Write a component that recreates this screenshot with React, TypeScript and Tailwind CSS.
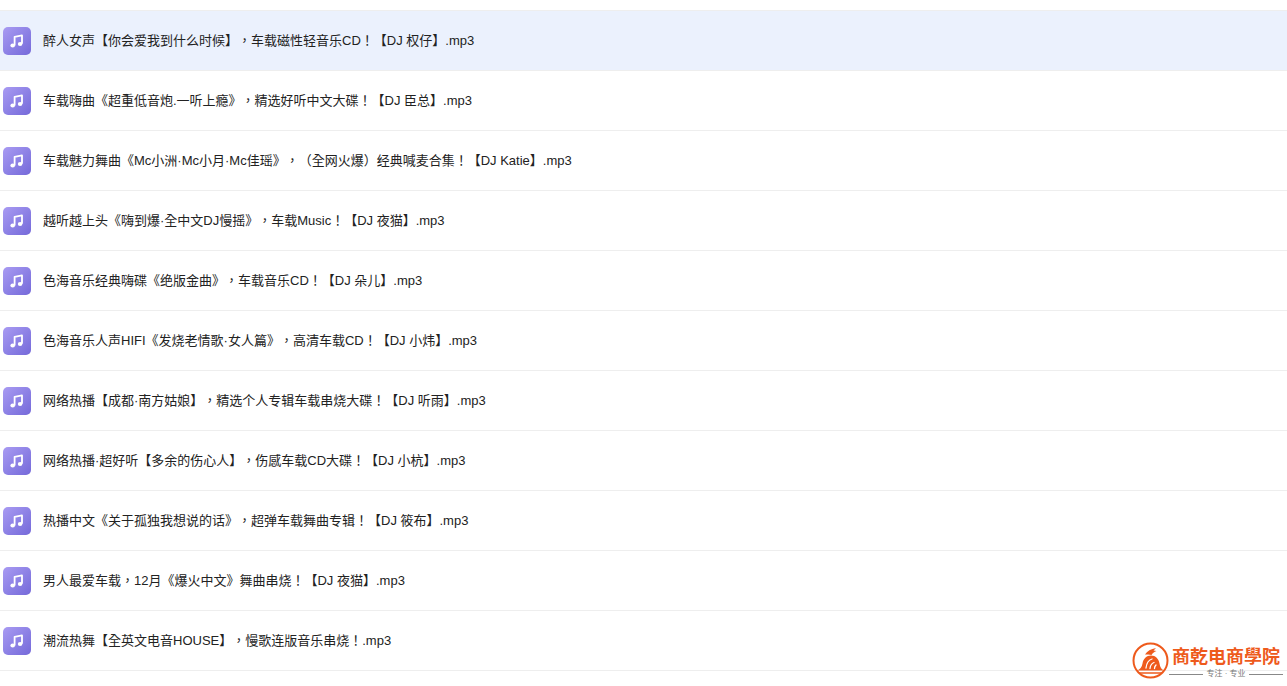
import React from 'react';

const tracks = [
  '醉人女声【你会爱我到什么时候】，车载磁性轻音乐CD！【DJ 权仔】.mp3',
  '车载嗨曲《超重低音炮.一听上瘾》，精选好听中文大碟！【DJ 臣总】.mp3',
  '车载魅力舞曲《Mc小洲·Mc小月·Mc佳瑶》，（全网火爆）经典喊麦合集！【DJ Katie】.mp3',
  '越听越上头《嗨到爆·全中文DJ慢摇》，车载Music！【DJ 夜猫】.mp3',
  '色海音乐经典嗨碟《绝版金曲》，车载音乐CD！【DJ 朵儿】.mp3',
  '色海音乐人声HIFI《发烧老情歌·女人篇》，高清车载CD！【DJ 小炜】.mp3',
  '网络热播【成都·南方姑娘】，精选个人专辑车载串烧大碟！【DJ 听雨】.mp3',
  '网络热播·超好听【多余的伤心人】，伤感车载CD大碟！【DJ 小杭】.mp3',
  '热播中文《关于孤独我想说的话》，超弹车载舞曲专辑！【DJ 筱布】.mp3',
  '男人最爱车载，12月《爆火中文》舞曲串烧！【DJ 夜猫】.mp3',
  '潮流热舞【全英文电音HOUSE】，慢歌连版音乐串烧！.mp3',
];

const MusicIcon = () => (
  <div className="w-[28px] h-[28px] shrink-0 rounded-[5px] bg-gradient-to-br from-[#a99bf2] to-[#7569d9] flex items-center justify-center">
    <svg width="18" height="18" viewBox="0 0 18 18" fill="none">
      <path d="M6.600 13.400V4.800L14 3.400v8.400" stroke="#fff" strokeWidth="1.800" strokeLinejoin="round" />
      <ellipse cx="4.700" cy="13.600" rx="2.300" ry="2" fill="#fff" />
      <ellipse cx="12.100" cy="12" rx="2.300" ry="2" fill="#fff" />
    </svg>
  </div>
);

const Row = ({ title, active }: { title: string; active: boolean }) => (
  <div className={`h-[60px] border-b border-[#eeeeee] pl-[3px] flex items-center gap-[12px] ${active ? 'bg-[#ebf1fd]' : 'bg-white'}`}>
    <MusicIcon />
    <span className="text-[13px] text-[#222222] whitespace-nowrap [text-spacing-trim:space-all]">{title}</span>
  </div>
);

export default function App() {
  return (
    <div className="relative w-[1287px] h-[686px] overflow-hidden bg-white font-['Liberation_Sans','Noto_Sans_CJK_TC',sans-serif]">
      <div className="pt-[10px]">
        <div className="border-t border-[#eeeeee]">
          {tracks.map((t, i) => (
            <Row key={i} title={t} active={i === 0} />
          ))}
        </div>
      </div>

      {/* watermark */}
      <div className="absolute left-[1132px] top-[642px] flex gap-[3px]">
        <svg width="37" height="37" viewBox="0 0 37 37" fill="none">
          <circle cx="18.500" cy="18.500" r="17" stroke="#ee5a1c" strokeWidth="2" />
          <path d="M5 28.500h27c-2.500-1-4-3.500-4.500-7-.7-4.500-4-8-8.500-8s-7.800 3.500-8.500 8c-.5 3.500-2.500 6-5.500 7z" fill="#ee5a1c" />
          <path d="M13 12.500c2-3.500 6-5.500 11-6.500l-2.500 2.500 3 .5c-2.500 1-4 2-5 4-2-.5-4.500-.5-6.500-.5z" fill="#ee5a1c" />
          <path d="M14 26c.5-4.500 2.500-8 6-9M18 26.500c.3-3 1.500-5 4-6M22.500 26.500c0-1.500.500-2.500 1.500-3.500" stroke="#fff" strokeWidth="1.300" strokeLinecap="round" />
          <path d="M7 31h23" stroke="#ee5a1c" strokeWidth="1.500" />
        </svg>
        <div className="flex flex-col items-center w-[108px]">
          <span className="text-[18px] leading-[27px] font-bold text-[#ee5a1c] whitespace-nowrap font-['Noto_Sans_CJK_TC',sans-serif]">商乾电商學院</span>
          <div className="flex items-center gap-[3px]">
            <div className="w-[34px] h-px bg-[#888888]" />
            <span className="text-[8px] leading-[10px] text-[#777777] whitespace-nowrap">专注 · 专业</span>
            <div className="w-[34px] h-px bg-[#888888]" />
          </div>
        </div>
      </div>
    </div>
  );
}
